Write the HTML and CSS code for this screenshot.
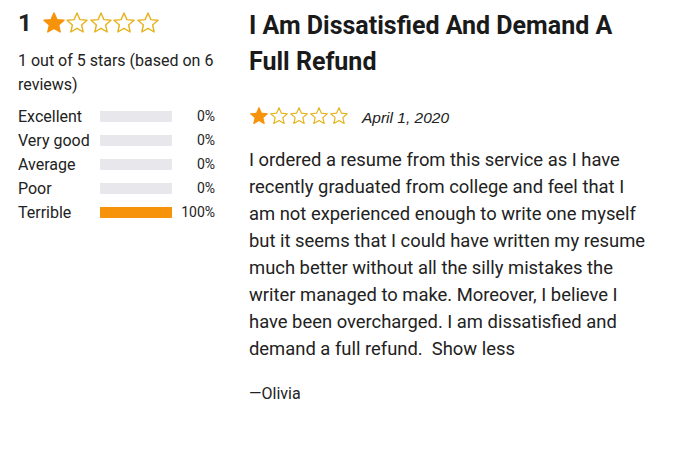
FILE: index.html
```html
<!DOCTYPE html>
<html lang="en">
<head>
	<meta charset="UTF-8">
	<title>review</title>
	<link rel="stylesheet" href="styles.css">
</head>
<body>
	<div class="page">
		<div class="summary">
			<div class="score">
				<span class="num">1</span>
				<span class="stars big">
					<svg viewBox="0 0 24 24"><polygon class="on" points="12,2 14.9,8.6 22,9.3 16.6,14 18.2,21 12,17.3 5.8,21 7.4,14 2,9.3 9.1,8.6"/></svg>
					<svg viewBox="0 0 24 24"><polygon points="12,2 14.9,8.6 22,9.3 16.6,14 18.2,21 12,17.3 5.8,21 7.4,14 2,9.3 9.1,8.6"/></svg>
					<svg viewBox="0 0 24 24"><polygon points="12,2 14.9,8.6 22,9.3 16.6,14 18.2,21 12,17.3 5.8,21 7.4,14 2,9.3 9.1,8.6"/></svg>
					<svg viewBox="0 0 24 24"><polygon points="12,2 14.9,8.6 22,9.3 16.6,14 18.2,21 12,17.3 5.8,21 7.4,14 2,9.3 9.1,8.6"/></svg>
					<svg viewBox="0 0 24 24"><polygon points="12,2 14.9,8.6 22,9.3 16.6,14 18.2,21 12,17.3 5.8,21 7.4,14 2,9.3 9.1,8.6"/></svg>
				</span>
			</div>
			<p class="based">1 out of 5 stars (based on 6 reviews)</p>
			<ul class="bars">
				<li><span class="label">Excellent</span><span class="bar"><i style="width:0%"></i></span><span class="pct">0%</span></li>
				<li><span class="label">Very good</span><span class="bar"><i style="width:0%"></i></span><span class="pct">0%</span></li>
				<li><span class="label">Average</span><span class="bar"><i style="width:0%"></i></span><span class="pct">0%</span></li>
				<li><span class="label">Poor</span><span class="bar"><i style="width:0%"></i></span><span class="pct">0%</span></li>
				<li><span class="label">Terrible</span><span class="bar"><i style="width:100%"></i></span><span class="pct">100%</span></li>
			</ul>
		</div>
		<div class="review">
			<h1>I Am Dissatisfied And Demand A Full Refund</h1>
			<div class="meta">
				<span class="stars small">
					<svg viewBox="0 0 24 24"><polygon class="on" points="12,2 14.9,8.6 22,9.3 16.6,14 18.2,21 12,17.3 5.8,21 7.4,14 2,9.3 9.1,8.6"/></svg>
					<svg viewBox="0 0 24 24"><polygon points="12,2 14.9,8.6 22,9.3 16.6,14 18.2,21 12,17.3 5.8,21 7.4,14 2,9.3 9.1,8.6"/></svg>
					<svg viewBox="0 0 24 24"><polygon points="12,2 14.9,8.6 22,9.3 16.6,14 18.2,21 12,17.3 5.8,21 7.4,14 2,9.3 9.1,8.6"/></svg>
					<svg viewBox="0 0 24 24"><polygon points="12,2 14.9,8.6 22,9.3 16.6,14 18.2,21 12,17.3 5.8,21 7.4,14 2,9.3 9.1,8.6"/></svg>
					<svg viewBox="0 0 24 24"><polygon points="12,2 14.9,8.6 22,9.3 16.6,14 18.2,21 12,17.3 5.8,21 7.4,14 2,9.3 9.1,8.6"/></svg>
				</span>
				<span class="date">April 1, 2020</span>
			</div>
			<p class="text">I ordered a resume from this service as I have recently graduated from college and feel that I am not experienced enough to write one myself but it seems that I could have written my resume much better without all the silly mistakes the writer managed to make. Moreover, I believe I have been overcharged. I am dissatisfied and demand a full refund.&nbsp; <a href="javascript:;">Show less</a></p>
			<p class="author">—Olivia</p>
		</div>
	</div>
</body>
</html>
```
FILE: styles.css
```css
*{ margin: 0; padding: 0; list-style: none; text-decoration: none; box-sizing: border-box; }
body{ font-family: Roboto, "Liberation Sans", sans-serif; color: #222; background: #fff; }

.page{ display: flex; gap: 34px; padding: 8px 18px; }

.summary{ width: 197px; flex-shrink: 0; }
.score{ display: flex; align-items: center; gap: 10px; height: 30px; }
.score .num{ font-size: 24px; font-weight: 700; }
.stars{ display: flex; }
.stars svg{ display: block; }
.stars polygon{ fill: #fff; stroke: #e6b31e; stroke-width: 1.4; stroke-linejoin: round; }
.stars polygon.on{ fill: #f7930a; stroke: #f7930a; }
.big svg{ width: 24px; height: 24px; margin-right: -0.5px; }
.small svg{ width: 20px; height: 20px; }

.based{ font-size: 16px; line-height: 24px; margin-top: 11px; }

.bars{ margin-top: 7px; }
.bars li{ display: flex; align-items: center; height: 24px; font-size: 16px; }
.bars .label{ width: 82px; }
.bars .bar{ width: 72px; height: 11px; background: #e8e8ec; }
.bars .bar i{ display: block; height: 100%; background: #f7930a; }
.bars .pct{ flex: 1; text-align: right; font-size: 14px; }

.review{ width: 405px; }
.review h1{ font-size: 25px; font-weight: 700; line-height: 36px; color: #1a1a1a; margin-top: 0; }
.meta{ display: flex; align-items: center; gap: 13px; margin-top: 24px; }
.date{ font-family: "Liberation Sans", Arial, sans-serif; font-style: italic; font-size: 15.5px; margin-top: 5px; }
.text{ font-size: 18.4px; line-height: 27px; margin-top: 19px; }
.text a{ color: #222; }
.author{ font-size: 16px; margin-top: 22px; }
```
